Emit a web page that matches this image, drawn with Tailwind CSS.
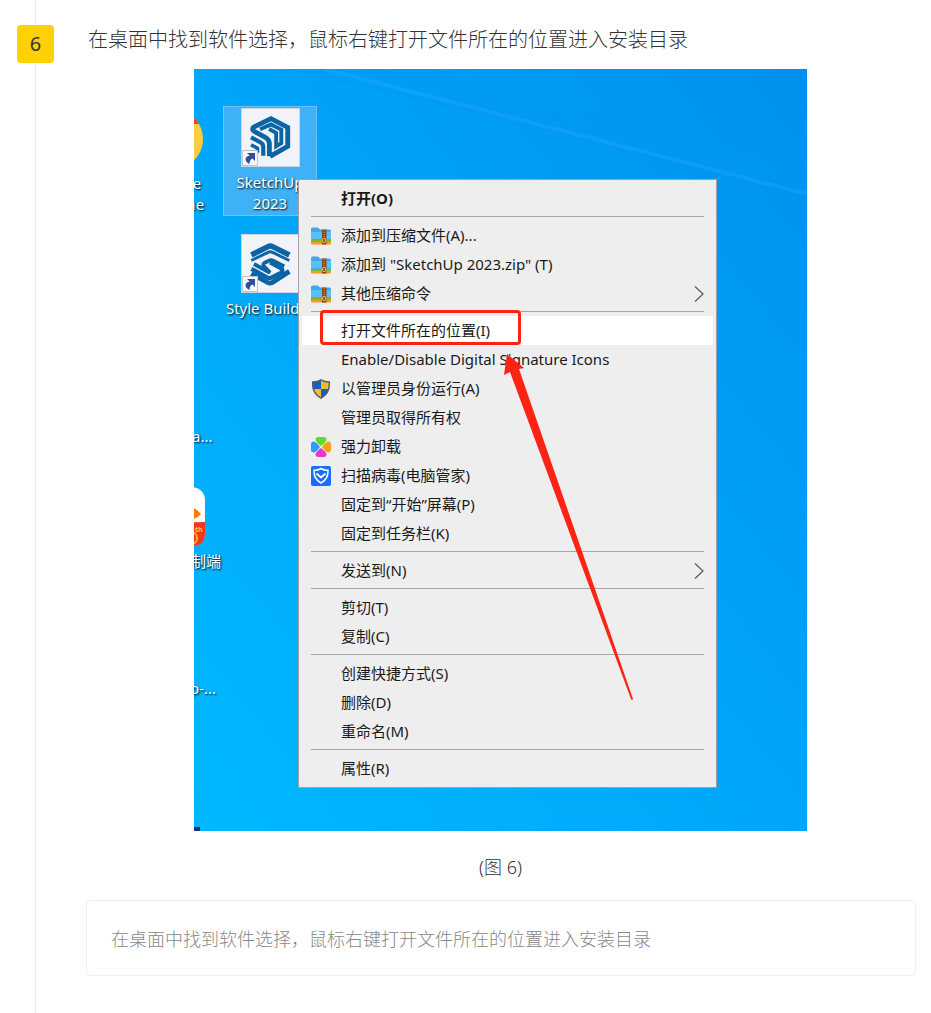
<!DOCTYPE html>
<html lang="zh-CN">
<head>
  <meta charset="UTF-8" />
  <meta name="viewport" content="width=device-width, initial-scale=1" />
  <title>SketchUp 2023 安装教程</title>
  <script src="https://cdn.jsdelivr.net/npm/@tailwindcss/browser@4"></script>
</head>
<body class="bg-white font-['Noto_Sans','Noto_Sans_CJK_SC',sans-serif]">

  <!-- 图标 -->
  <svg class="hidden">
    <symbol id="zip" viewBox="0 0 20 18">
      <path d="M0 2q0-1.500 1.500-1.500H7l2 2h9.500q1.500 0 1.500 1.500v11H0z" fill="#3fa9ee" />
      <path d="M0 5h20v7H0z" fill="#5cc0f8" />
      <path d="M0 13h20v2H0z" fill="#7cb82f" />
      <path d="M0 15h20v1.500q0 1-1 1H1q-1 0-1-1z" fill="#f59a23" />
      <path d="M11 2.500h4.500v15H11z" fill="#8a4b14" />
      <path d="M13.200 3v8" stroke="#d99a4e" stroke-dasharray="1 1" />
      <rect x="11.700" y="11.500" width="3" height="4" rx="1" fill="#8a4b14" stroke="#ffd27a" />
    </symbol>
    <symbol id="shortcut" viewBox="0 0 16 16">
      <path d="M.5.5h15v15H.5z" fill="#f7f7fa" stroke="#c2c2c8" />
      <path d="M5 3h8v8l-2.500-2.500Q7.500 9.500 7.500 14 3.500 12 3.500 9 4 6 7.800 5.800z" fill="#2c4f9a" />
    </symbol>
    <symbol id="chevron" viewBox="0 0 10 16">
      <path d="M1 .5 9 8l-8 7.500" fill="none" stroke="#5c5c66" stroke-width="1.300" />
    </symbol>
  </svg>

  <section class="flex min-h-screen">
    <!-- 步骤编号 + 时间线 -->
    <div class="flex w-[71px] shrink-0 flex-col items-center">
      <div class="h-[25px] w-px bg-[#ececec]"></div>
      <div class="flex h-[38px] w-[37px] items-center justify-center rounded bg-[#ffd004] text-xl text-[#333]">6</div>
      <div class="w-px flex-1 bg-[#ececec]"></div>
    </div>

    <div class="min-w-0 flex-1 pt-[25px] pr-[15px] pb-9 pl-[15px]">
      <h2 class="pl-0.5 text-xl leading-[30px] font-light text-[#333]">在桌面中找到软件选择，鼠标右键打开文件所在的位置进入安装目录</h2>

      <figure class="mt-3.5 flex flex-col items-center pr-px">
        <!-- 桌面 -->
        <div class="relative h-[762px] w-[613px] max-w-full overflow-hidden bg-linear-to-tr from-[#00b8ff] via-[#00a6fa] to-[#0090ee] text-[15px] leading-[21px]">
          <svg class="absolute inset-0 h-full w-full" viewBox="0 0 613 762" preserveAspectRatio="none">
            <path d="M90 0 613 125V95L240 0z" fill="#0098f2" fill-opacity=".35" />
            <path d="M130 0 613 125" stroke="#35b0ff" stroke-opacity=".25" stroke-width="4" />
          </svg>

          <!-- 左侧被截断的图标 -->
          <svg class="absolute top-[40px] left-[-51px] h-[60px] w-[60px]" viewBox="0 0 60 60">
            <circle cx="30" cy="30" r="30" fill="#ffcd3c" />
            <path d="M4 15A30 30 0 0 1 56 15z" fill="#ea4335" />
          </svg>
          <div class="absolute top-[104px] left-[-63px] w-[90px] text-center text-white text-shadow-[1px_1px_2px_#000]">Google<br />Chrome</div>
          <div class="absolute top-[357px] left-[-2px] text-white text-shadow-[1px_1px_2px_#000]">a...</div>
          <svg class="absolute top-[418px] left-[-48px] h-[60px] w-[60px]" viewBox="0 0 60 60">
            <rect width="59" height="59" rx="13" fill="#fff" />
            <path d="M0 37 59 35v11q0 13-13 13H13Q0 59 0 46z" fill="#f4371d" />
            <path d="M47 21q4 1 8 6-3 4-8 5z" fill="#ff7a00" />
            <ellipse cx="48" cy="51" rx="3" ry="5" fill="none" stroke="#ffb31a" stroke-width="2" />
            <text x="49" y="45" font-size="7" font-weight="700" fill="#ffd23c">th</text>
          </svg>
          <div class="absolute top-[482px] left-[-3px] text-white text-shadow-[1px_1px_2px_#000]">制端</div>
          <div class="absolute top-[609px] left-[-4px] text-white text-shadow-[1px_1px_2px_#000]">p-...</div>
          <div class="absolute bottom-0 left-0 h-1 w-1.5 bg-[#1c3a5e]"></div>

          <!-- SketchUp -->
          <div class="absolute top-[37px] left-[29px] flex h-[110px] w-[94px] flex-col items-center border border-[#6cc2fa] bg-[#3fb1f7] pt-px text-center text-white">
            <div class="relative h-[59px] w-[59px] border border-[#c9d5e2] bg-[#f2f3f9]">
              <svg class="h-full w-full" viewBox="153 57 177 175" fill="none" stroke="#0b64a5" stroke-width="15">
                <path d="M240 203 295 172V113L243 86 188 113q-6 8 6 14l30 16q14 8 14 20v40" />
                <path d="M209 119 243 104 275 120v42l-16 10v-42l-22-12" stroke-width="12" />
                <path d="M181 144 211 160q8 5 8 13v28" stroke-width="13" />
                <path d="M181 167 201 178v14" stroke-width="11" />
              </svg>
              <svg class="absolute bottom-0 left-0 h-4 w-4"><use href="#shortcut" /></svg>
            </div>
            <div class="mt-[5px] text-shadow-[1px_1px_2px_#000]">SketchUp<br />2023</div>
          </div>

          <!-- Style Builder -->
          <div class="absolute top-[165px] left-[29px] flex w-[94px] flex-col items-center text-center whitespace-nowrap text-white">
            <div class="relative h-[59px] w-[59px] border border-[#c9d5e2] bg-[#f2f3f9]">
              <svg class="h-full w-full" viewBox="153 44 177 175" fill="none" stroke="#0b64a5" stroke-width="17">
                <path d="M182 105 234 79q7-4 14 0l52 26" />
                <path d="M182 122 234 97q7-4 14 0l52 25" stroke-width="9" />
                <path d="M190 133 240 160 222 141q-7-8 3-13l11-5q7-4 14 0l34 18" stroke-width="12" />
                <path d="M240 128 272 145q14 8 0 16l-28 14q-6 3-12 0L182 148" stroke-width="13" />
                <path d="M182 163 232 190q8 4 16 0l52-34" stroke-width="15" />
              </svg>
              <svg class="absolute bottom-0 left-0 h-4 w-4"><use href="#shortcut" /></svg>
            </div>
            <div class="mt-[5px] text-shadow-[1px_1px_2px_#000]">Style Builder</div>
          </div>

          <!-- 右键菜单 -->
          <div class="absolute top-[110px] left-[104px] w-[419px] border border-[#a0a0a0] bg-[#eee] px-[3px] py-1 text-[#1a1a1a]" role="menu">
            <button class="flex h-[29px] w-full items-center pr-[9px] pl-[39px] font-bold" role="menuitem">打开(O)</button>
            <hr class="mx-[9px] mt-[3px] mb-1 border-[#a6a6a6]" />
            <button class="flex h-[29px] w-full items-center gap-2.5 px-[9px]" role="menuitem"><svg class="h-[18px] w-5"><use href="#zip" /></svg>添加到压缩文件(A)...</button>
            <button class="flex h-[29px] w-full items-center gap-2.5 px-[9px]" role="menuitem"><svg class="h-[18px] w-5"><use href="#zip" /></svg>添加到 "SketchUp 2023.zip" (T)</button>
            <button class="flex h-[29px] w-full items-center gap-2.5 px-[9px]" role="menuitem"><svg class="h-[18px] w-5"><use href="#zip" /></svg>其他压缩命令<svg class="ml-auto h-4 w-2.5"><use href="#chevron" /></svg></button>
            <hr class="mx-[9px] mt-[3px] mb-1 border-[#a6a6a6]" />
            <button class="flex h-[29px] w-full items-center bg-white pr-[9px] pl-[39px]" role="menuitem">打开文件所在的位置(I)</button>
            <button class="flex h-[29px] w-full items-center pr-[9px] pl-[39px]" role="menuitem">Enable/Disable Digital Signature Icons</button>
            <button class="flex h-[29px] w-full items-center gap-2.5 px-[9px]" role="menuitem">
              <svg class="h-5 w-5" viewBox="0 0 20 20">
                <path d="M10 .8q4 2.400 8.300 2.200.8 11.500-8.300 16.200Q.9 14.500 1.700 3 6 3.200 10 .8z" fill="#fdb92e" />
                <path d="M10 1v9H2Q1.400 7 1.700 3 6 3.200 10 1zM10 10h8q-1.500 6-8 9z" fill="#0f63b8" />
                <path d="M10 .8q4 2.400 8.300 2.200.8 11.500-8.300 16.200Q.9 14.500 1.700 3 6 3.200 10 .8z" fill="none" stroke="#555c66" stroke-width="1.400" />
              </svg>以管理员身份运行(A)</button>
            <button class="flex h-[29px] w-full items-center pr-[9px] pl-[39px]" role="menuitem">管理员取得所有权</button>
            <button class="flex h-[29px] w-full items-center gap-2.5 px-[9px]" role="menuitem">
              <svg class="h-5 w-5" viewBox="0 0 20 20">
                <path d="M10 9Q4.500 5 4.500 2.500 4.500 0 7.500 0h5q3 0 3 2.500Q15.500 5 10 9z" fill="#5fdc2c" />
                <path d="M11 10q4-5.500 6.500-5.500Q20 4.500 20 7.500v5q0 3-2.500 3-2.500 0-6.500-5.500z" fill="#fb9f14" />
                <path d="M10 11q5.500 4 5.500 6.500 0 2.500-3 2.500h-5q-3 0-3-2.500Q4.500 15 10 11z" fill="#e838c8" />
                <path d="M9 10q-4 5.500-6.500 5.500-2.500 0-2.500-3v-5q0-3 2.500-3Q5 4.500 9 10z" fill="#2f9bff" />
              </svg>强力卸载</button>
            <button class="flex h-[29px] w-full items-center gap-2.5 px-[9px]" role="menuitem">
              <svg class="h-5 w-5" viewBox="0 0 20 20">
                <rect width="20" height="20" rx="2" fill="#1670fb" />
                <path d="M10 2.500q3.500 2 7 1.700.4 8.800-7 12.800Q2.600 13 3 4.200q3.500.3 7-1.700z" fill="none" stroke="#fff" stroke-width="1.500" />
                <path d="m5.500 7.500 4.500 4 4.500-4" fill="none" stroke="#fff" stroke-width="1.800" />
              </svg>扫描病毒(电脑管家)</button>
            <button class="flex h-[29px] w-full items-center pr-[9px] pl-[39px]" role="menuitem">固定到“开始”屏幕(P)</button>
            <button class="flex h-[29px] w-full items-center pr-[9px] pl-[39px]" role="menuitem">固定到任务栏(K)</button>
            <hr class="mx-[9px] mt-[3px] mb-1 border-[#a6a6a6]" />
            <button class="flex h-[29px] w-full items-center pr-[9px] pl-[39px]" role="menuitem">发送到(N)<svg class="ml-auto h-4 w-2.5"><use href="#chevron" /></svg></button>
            <hr class="mx-[9px] mt-[3px] mb-1 border-[#a6a6a6]" />
            <button class="flex h-[29px] w-full items-center pr-[9px] pl-[39px]" role="menuitem">剪切(T)</button>
            <button class="flex h-[29px] w-full items-center pr-[9px] pl-[39px]" role="menuitem">复制(C)</button>
            <hr class="mx-[9px] mt-[3px] mb-1 border-[#a6a6a6]" />
            <button class="flex h-[29px] w-full items-center pr-[9px] pl-[39px]" role="menuitem">创建快捷方式(S)</button>
            <button class="flex h-[29px] w-full items-center pr-[9px] pl-[39px]" role="menuitem">删除(D)</button>
            <button class="flex h-[29px] w-full items-center pr-[9px] pl-[39px]" role="menuitem">重命名(M)</button>
            <hr class="mx-[9px] mt-[3px] mb-1 border-[#a6a6a6]" />
            <button class="flex h-[29px] w-full items-center pr-[9px] pl-[39px]" role="menuitem">属性(R)</button>
          </div>

          <!-- 红框和箭头标注 -->
          <div class="pointer-events-none absolute top-[241px] left-[126px] h-[35px] w-[201px] rounded-sm border-3 border-[#ff2314]"></div>
          <svg class="pointer-events-none absolute top-[285px] left-[304px] h-[348px] w-[140px]" viewBox="498 354 140 348">
            <path d="M507 354 504 375 510 372 631 699q1 2 2 0L519 369 524 368z" fill="#ff2314" />
          </svg>
        </div>
        <figcaption class="mt-[22px] text-lg leading-7 font-light text-[#333]">(图 6)</figcaption>
      </figure>

      <p class="mt-[19px] rounded border border-[#f0f0f0] pt-[25px] pr-6 pb-[23px] pl-6 text-lg leading-[26px] font-light text-[#888]">在桌面中找到软件选择，鼠标右键打开文件所在的位置进入安装目录</p>
    </div>
  </section>

</body>
</html>
